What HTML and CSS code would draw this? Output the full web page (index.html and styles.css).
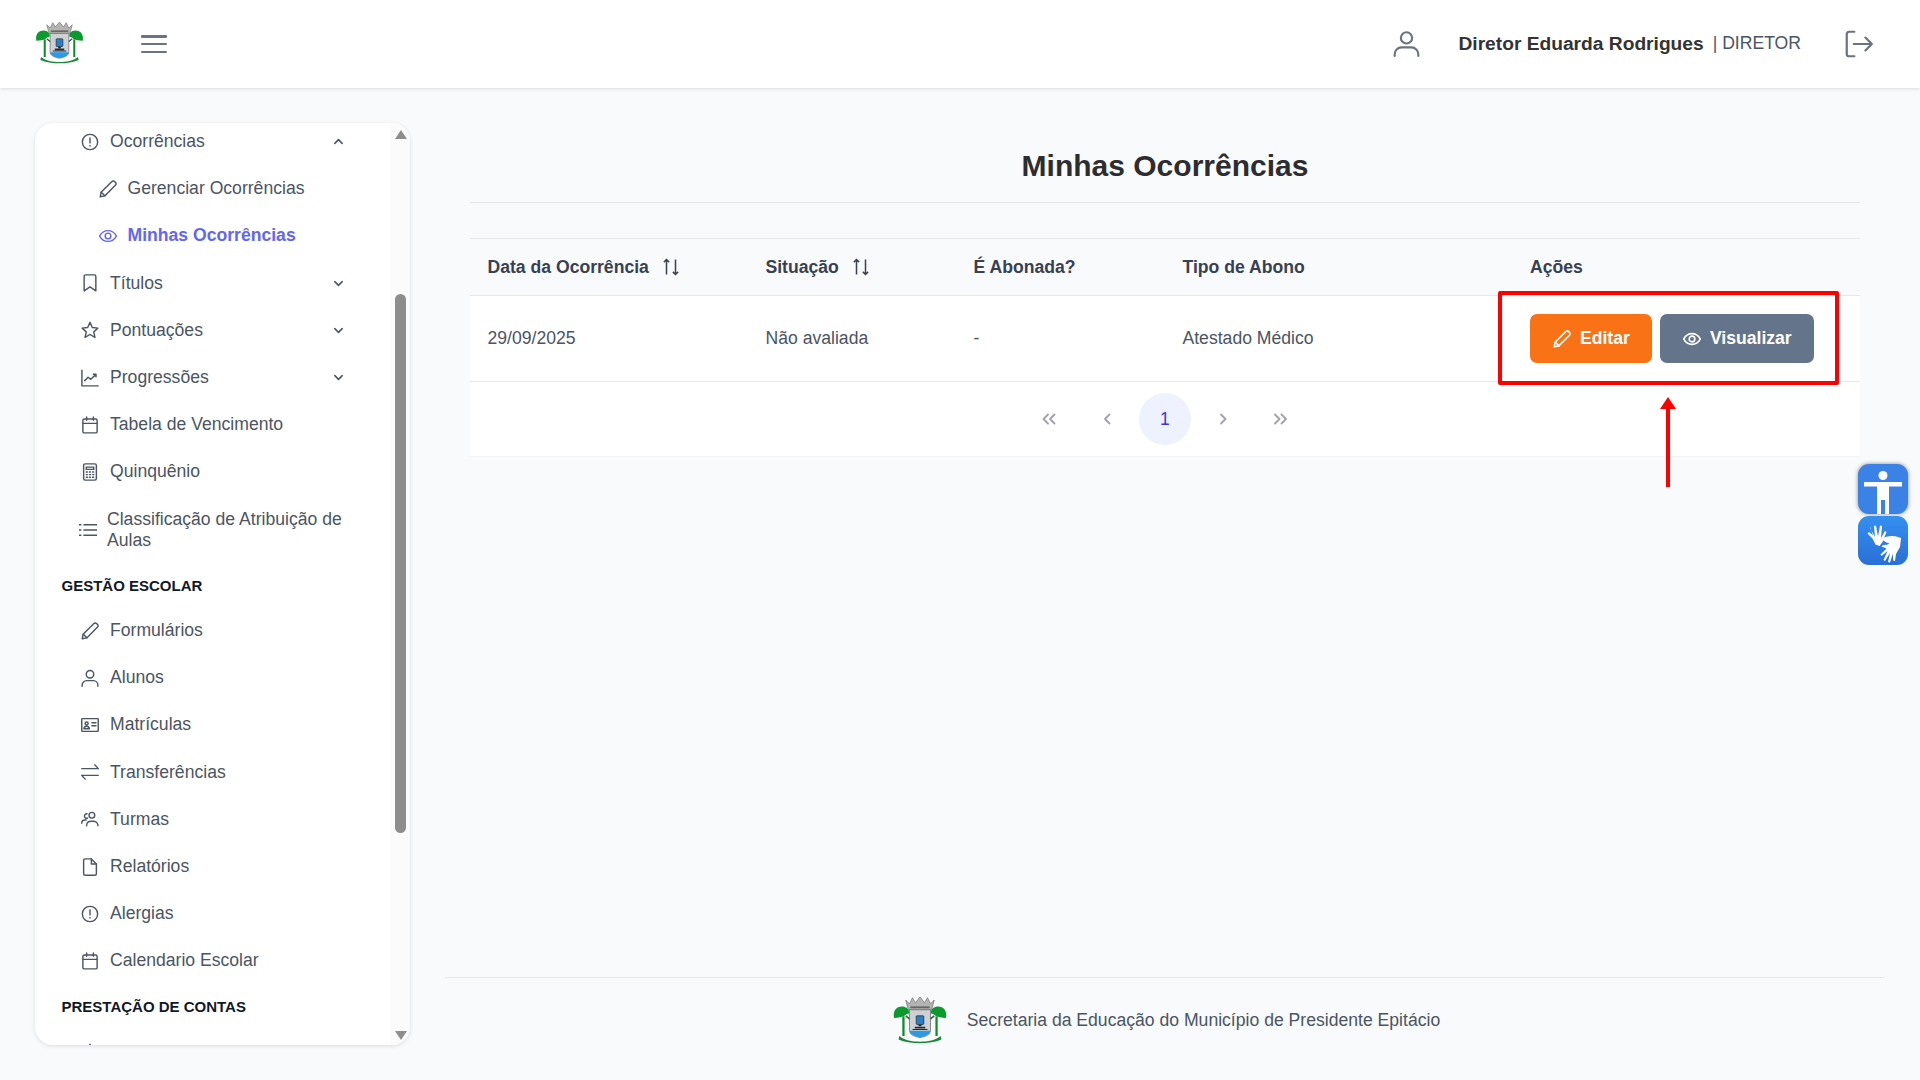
FILE: index.html
```html
<!DOCTYPE html>
<html lang="pt-BR">
<head>
<meta charset="utf-8">
<title>Minhas Ocorrências</title>
<link rel="stylesheet" href="styles.css">
</head>
<body>
<svg class="defs" aria-hidden="true">
  <symbol id="i-alert" viewBox="0 0 24 24"><circle cx="12" cy="12" r="10.2"/><path d="M12 6.600v6.600M12 16.600v.8"/></symbol>
  <symbol id="i-pencil" viewBox="0 0 24 24"><path d="M1.600 22.400l1.200-6.100L16.900 2.200a2.900 2.900 0 0 1 4.100 0l.8.8a2.900 2.900 0 0 1 0 4.100L7.700 21.200z"/><path d="M3 16.200l4.800 4.900"/></symbol>
  <symbol id="i-eye" viewBox="0 0 24 24"><path d="M.8 12C3.200 7.600 7.200 4.800 12 4.800S20.800 7.600 23.200 12C20.800 16.400 16.800 19.200 12 19.200S3.200 16.400.8 12z"/><circle cx="12" cy="12" r="3.800"/></symbol>
  <symbol id="i-bookmark" viewBox="0 0 24 24"><path d="M4.200 22.500V3.200a2 2 0 0 1 2-2h11.600a2 2 0 0 1 2 2v19.300L12 17.200z"/></symbol>
  <symbol id="i-star" viewBox="0 0 24 24"><path d="M12 1.800l3.100 6.900 7.400.8-5.500 5 1.600 7.300-6.600-3.800-6.600 3.800 1.600-7.300-5.500-5 7.400-.8z"/></symbol>
  <symbol id="i-chart" viewBox="0 0 24 24"><path d="M1.200 1.500v21h21.600"/><path d="M5 15.500l4.500-4.500 3.500 2.800 6.800-6.300M16.400 7h3.600v3.400"/></symbol>
  <symbol id="i-calendar" viewBox="0 0 24 24"><rect x="2.500" y="4" width="19" height="18.500" rx="2"/><path d="M2.500 9.800h19M7.500 1.300v4.500M16.500 1.300v4.500"/></symbol>
  <symbol id="i-calc" viewBox="0 0 24 24"><rect x="3.500" y="1.200" width="17" height="21.600" rx="2"/><path d="M7 5.500h10v3H7zM7 12h1.500M11.200 12h1.500M15.500 12h1.500M7 15.500h1.500M11.200 15.500h1.500M15.500 15.500h1.500M7 19h1.500M11.200 19h1.500M15.500 19h1.500"/></symbol>
  <symbol id="i-list" viewBox="0 0 24 24"><path d="M6.500 5h17M6.500 12h17M6.500 19h17M.5 5h2M.5 12h2M.5 19h2"/></symbol>
  <symbol id="i-user" viewBox="0 0 24 24"><circle cx="12" cy="7" r="5"/><path d="M1.500 23v-1.500a6 6 0 0 1 6-6h9a6 6 0 0 1 6 6V23"/></symbol>
  <symbol id="i-card" viewBox="0 0 24 24"><rect x="1" y="3.500" width="22" height="17" rx="1"/><circle cx="7.500" cy="10" r="2"/><path d="M3.800 17c.4-2.200 1.800-3.300 3.700-3.300s3.300 1.100 3.700 3.300zM14.500 9h5.500M14.500 13h5.500"/></symbol>
  <symbol id="i-swap" viewBox="0 0 24 24"><path d="M1 7.500h21.500M18.500 2.500l4.500 5M23 16.500H1.500M5.500 21.500L1 16.500"/></symbol>
  <symbol id="i-users" viewBox="0 0 24 24"><circle cx="14.500" cy="7" r="3.800"/><path d="M7.500 21v-1a6 6 0 0 1 6-5h2a6 6 0 0 1 7 5v1"/><path d="M8.800 10.800a3 3 0 1 1-.8-5.700M1 17.800v-.8a4 4 0 0 1 4-3.600h2"/></symbol>
  <symbol id="i-file" viewBox="0 0 24 24"><path d="M3.500 3.200a2 2 0 0 1 2-2h8.300l6.700 6.700v13a2 2 0 0 1-2 2H5.500a2 2 0 0 1-2-2z"/><path d="M13.800 1.200v6.700h6.700"/></symbol>
  <symbol id="i-out" viewBox="0 0 24 24"><path d="M8 1.500H3.500a2 2 0 0 0-2 2v17a2 2 0 0 0 2 2H8M7.500 12h15.500M17.500 6.500L23 12l-5.500 5.500"/></symbol>
  <symbol id="i-sort" viewBox="0 0 24 24"><path d="M6 22V2M2.500 5.500L6 2l3.500 3.500M18 2v20M14.500 18.500L18 22l3.500-3.500"/></symbol>
  <symbol id="logo" viewBox="0 0 140 125">
    <path d="M32 8l10 10 8-16 8 13 12-15 12 15 8-13 8 16 10-10-7 26H39z" fill="#b4b4b2" stroke="#77777a" stroke-width="2"/>
    <path d="M44 25h52v5H44z" fill="#66666a"/>
    <path d="M23 52h6v52h-6zM111 52h6v52h-6z" fill="#0f8a2f"/>
    <path d="M1 56C-3 36 8 24 24 25c11 1 18 8 17 19-6 1-10 3-14 8-7 1-13 3-26 4z" fill="#0b9a2d"/>
    <path d="M139 56c4-20-7-32-23-31-11 1-18 8-17 19 6 1 10 3 14 8 7 1 13 3 26 4z" fill="#0b9a2d"/>
    <path d="M42 34h56v54c0 12-12 17-28 20-16-3-28-8-28-20z" fill="#cfd0d2" stroke="#66686c" stroke-width="2"/>
    <rect x="60" y="50" width="20" height="23" rx="2" fill="#2a7fc4" stroke="#1a2a44" stroke-width="2"/>
    <path d="M66 73h8v5h-8zM56 79h28v5H56zM50 85h40v3H50z" fill="#2a2c30"/>
    <path d="M32 50l10 8M108 50l-10 8" stroke="#2f5a3a" stroke-width="4"/>
    <path d="M43 90h54c1 8-10 15-27 17-17-2-28-9-27-17z" fill="#2a9ae6"/>
    <path d="M15 104c14 12 34 15 55 15s41-3 55-15l2 9c-15 7-36 10-57 10s-42-3-57-10z" fill="#1a8a3a"/>
  </symbol>
</svg>

<header class="topbar">
  <div class="topbar-left">
    <svg class="logo-top"><use href="#logo"/></svg>
    <button class="burger" aria-label="Menu"><span></span><span></span><span></span></button>
  </div>
  <div class="topbar-right">
    <svg class="ico top-user"><use href="#i-user"/></svg>
    <strong class="user-name">Diretor Eduarda Rodrigues</strong>
    <span class="user-role">| DIRETOR</span>
    <svg class="ico top-out"><use href="#i-out"/></svg>
  </div>
</header>

<div class="content">
  <aside class="sidebar">
    <nav class="menu">
      <a class="item"><svg class="ico"><use href="#i-alert"/></svg><span class="label">Ocorrências</span><svg class="chev" viewBox="0 0 12 12"><path d="M2 8l4-4 4 4"/></svg></a>
      <a class="item sub"><svg class="ico"><use href="#i-pencil"/></svg><span class="label">Gerenciar Ocorrências</span></a>
      <a class="item sub active"><svg class="ico"><use href="#i-eye"/></svg><span class="label">Minhas Ocorrências</span></a>
      <a class="item"><svg class="ico"><use href="#i-bookmark"/></svg><span class="label">Títulos</span><svg class="chev" viewBox="0 0 12 12"><path d="M2 4l4 4 4-4"/></svg></a>
      <a class="item"><svg class="ico"><use href="#i-star"/></svg><span class="label">Pontuações</span><svg class="chev" viewBox="0 0 12 12"><path d="M2 4l4 4 4-4"/></svg></a>
      <a class="item"><svg class="ico"><use href="#i-chart"/></svg><span class="label">Progressões</span><svg class="chev" viewBox="0 0 12 12"><path d="M2 4l4 4 4-4"/></svg></a>
      <a class="item"><svg class="ico"><use href="#i-calendar"/></svg><span class="label">Tabela de Vencimento</span></a>
      <a class="item"><svg class="ico"><use href="#i-calc"/></svg><span class="label">Quinquênio</span></a>
      <a class="item multi"><svg class="ico"><use href="#i-list"/></svg><span class="label">Classificação de Atribuição de Aulas</span></a>
      <div class="section">GESTÃO ESCOLAR</div>
      <a class="item"><svg class="ico"><use href="#i-pencil"/></svg><span class="label">Formulários</span></a>
      <a class="item"><svg class="ico"><use href="#i-user"/></svg><span class="label">Alunos</span></a>
      <a class="item"><svg class="ico"><use href="#i-card"/></svg><span class="label">Matrículas</span></a>
      <a class="item"><svg class="ico"><use href="#i-swap"/></svg><span class="label">Transferências</span></a>
      <a class="item"><svg class="ico"><use href="#i-users"/></svg><span class="label">Turmas</span></a>
      <a class="item"><svg class="ico"><use href="#i-file"/></svg><span class="label">Relatórios</span></a>
      <a class="item"><svg class="ico"><use href="#i-alert"/></svg><span class="label">Alergias</span></a>
      <a class="item"><svg class="ico"><use href="#i-calendar"/></svg><span class="label">Calendario Escolar</span></a>
      <div class="section">PRESTAÇÃO DE CONTAS</div>
      <a class="item"><svg class="ico"><use href="#i-star"/></svg><span class="label"></span></a>
    </nav>
    <div class="scrollbar">
      <span class="arrow-up"></span>
      <span class="thumb"></span>
      <span class="arrow-down"></span>
    </div>
  </aside>

  <div class="main">
    <main class="panel">
      <h1 class="title">Minhas Ocorrências</h1>
      <table class="grid">
        <colgroup><col class="c1"><col class="c2"><col class="c3"><col class="c4"><col class="c5"></colgroup>
        <thead>
          <tr>
            <th><span class="th-in">Data da Ocorrência <svg class="sort"><use href="#i-sort"/></svg></span></th>
            <th><span class="th-in">Situação <svg class="sort"><use href="#i-sort"/></svg></span></th>
            <th>É Abonada?</th>
            <th>Tipo de Abono</th>
            <th class="th-actions">Ações</th>
          </tr>
        </thead>
        <tbody>
          <tr>
            <td>29/09/2025</td>
            <td>Não avaliada</td>
            <td>-</td>
            <td>Atestado Médico</td>
            <td class="td-actions">
              <div class="actions">
                <button class="btn btn-edit"><svg class="ico"><use href="#i-pencil"/></svg>Editar</button>
                <button class="btn btn-view"><svg class="ico"><use href="#i-eye"/></svg>Visualizar</button>
              </div>
            </td>
          </tr>
        </tbody>
      </table>
      <div class="pager">
        <span class="pg"><svg viewBox="0 0 14 12"><path d="M6 1.500L1.500 6 6 10.500M12.500 1.500L8 6l4.500 4.500"/></svg></span>
        <span class="pg"><svg viewBox="0 0 14 12"><path d="M9.500 1.500L5 6l4.500 4.500"/></svg></span>
        <span class="pg current">1</span>
        <span class="pg"><svg viewBox="0 0 14 12"><path d="M5 1.500L9.500 6 5 10.500"/></svg></span>
        <span class="pg"><svg viewBox="0 0 14 12"><path d="M1 1.500L5.500 6 1 10.500M7.500 1.500L12 6l-4.500 4.500"/></svg></span>
      </div>
    </main>
    <footer class="footer">
      <svg class="logo-foot"><use href="#logo"/></svg>
      <span>Secretaria da Educação do Município de Presidente Epitácio</span>
    </footer>
  </div>
</div>

<div class="mark-box"></div>
<svg class="mark-arrow" viewBox="0 0 16 90"><path d="M8 0l8 12H10v78H6V12H0z"/></svg>

<div class="a11y">
  <button class="a11y-btn a11y-body" aria-label="Acessibilidade">
    <svg viewBox="0 0 50 50"><circle cx="25" cy="11.500" r="4.500"/><path d="M6 18h38v4.500H31V50h-4V36h-4v14h-4V22.500H6z"/></svg>
  </button>
  <button class="a11y-btn a11y-hands" aria-label="Libras">
    <svg viewBox="0 0 50 50"><path d="M12 12l5 9-1-11 2-.5 2 11 2-11 2 .500-1 12 4-7 1.500 1-4 10-3 4-4-1.500-3-6-5-5 1.500-1.500 4 3.500-3-9z"/><path d="M23 23c5-3 12-4 17-2l3 1-1 9-4 7-1 7-2-.5 0-7-3 9-2-.5 2-9-5 8-1.500-1 4-9-6 5-1-1.500 6-6-5-2c1-1 3-2 5-1.500l3-1.500-3-1z"/></svg>
  </button>
</div>
</body>
</html>
```

FILE: styles.css
```css
* { box-sizing: border-box; }
html, body { margin: 0; height: 100%; }
body {
  width: 1920px;
  height: 1080px;
  overflow: hidden;
  position: relative;
  background: #f9fafb;
  color: #4b5563;
  font-family: "Liberation Sans", Arial, sans-serif;
  font-size: 17.6px;
  display: flex;
  flex-direction: column;
}
.defs { display: none; }
.ico {
  width: 18px;
  height: 18px;
  flex: none;
  fill: none;
  stroke: currentColor;
  stroke-width: 1.9;
  stroke-linecap: round;
  stroke-linejoin: round;
}

/* Top bar */
.topbar {
  height: 88px;
  flex: none;
  background: #fff;
  box-shadow: 0 1px 3px rgba(0, 0, 0, .12);
  display: flex;
  align-items: center;
  justify-content: space-between;
  padding: 0 47px 0 36px;
  position: relative;
  z-index: 2;
}
.topbar-left { display: flex; align-items: center; gap: 58px; }
.logo-top { width: 47px; height: 42px; display: block; margin-top: -2px; }
.burger {
  width: 26px;
  height: 18px;
  padding: 0;
  border: 0;
  background: none;
  display: flex;
  flex-direction: column;
  justify-content: space-between;
}
.burger span { display: block; height: 2.500px; background: #6b7280; border-radius: 1px; }
.topbar-right { display: flex; align-items: center; }
.top-user { width: 27px; height: 27px; color: #6b7280; stroke-width: 1.900; margin-right: 38px; margin-top: -2px; }
.user-name { font-size: 19.200px; color: #333; margin-right: 9px; margin-top: -1px; }
.user-role { font-size: 17.6px; color: #4b5563; margin-right: 44px; margin-top: -2px; }
.top-out { width: 28px; height: 28px; color: #6b7280; stroke-width: 1.900; margin-top: -1px; }

/* Page body */
.content { flex: 1; min-height: 0; display: flex; padding: 35px 35px 0; gap: 35px; }

/* Sidebar */
.sidebar {
  width: 375px;
  height: 922px;
  flex: none;
  display: flex;
  background: #fff;
  border-radius: 18px;
  overflow: hidden;
  box-shadow: 0 1px 4px rgba(0, 0, 0, .12);
}
.menu { flex: 1; min-width: 0; margin-top: -5px; padding-left: 27px; }
.item {
  height: 47.2px;
  display: flex;
  align-items: center;
  gap: 11px;
  padding-left: 19px;
  color: #4b5563;
}
.item.sub { padding-left: 36.500px; }
.item.active { color: #6366f1; font-weight: 700; }
.item.multi { height: 68px; padding-left: 17px; gap: 10px; padding-right: 30px; line-height: 21px; }
.item .label { flex: 1; }
.chev {
  width: 11px;
  height: 11px;
  flex: none;
  margin-right: 47px;
  fill: none;
  stroke: #4b5563;
  stroke-width: 1.7;
  stroke-linecap: round;
  stroke-linejoin: round;
}
.section {
  height: 43.500px;
  display: flex;
  align-items: center;
  margin-left: -.5px;
  font-size: 15px;
  font-weight: 700;
  color: #111827;
}
.scrollbar {
  width: 19px;
  flex: none;
  background: #fbfbfb;
  display: flex;
  flex-direction: column;
  align-items: center;
  padding: 7px 0 5px;
}
.arrow-up, .arrow-down { width: 0; height: 0; border-left: 6.500px solid transparent; border-right: 6.500px solid transparent; }
.arrow-up { border-bottom: 9px solid #8d8d8d; }
.arrow-down { border-top: 9px solid #8d8d8d; margin-top: auto; }
.thumb { width: 11px; height: 539px; background: #8d8d8d; border-radius: 6px; margin-top: 155px; }

/* Main */
.main { flex: 1; min-width: 0; display: flex; flex-direction: column; }
.panel { flex: 1; padding: 0 25px; }
.title {
  margin: 0 0 35px;
  padding: 25px 0 18px;
  height: 80px;
  text-align: center;
  font-size: 30px;
  line-height: 36px;
  font-weight: 700;
  color: #2d2d30;
  border-bottom: 1px solid #e5e7eb;
}
.grid {
  width: 100%;
  table-layout: fixed;
  border-collapse: collapse;
  border-top: 1px solid #e5e7eb;
}
.c1 { width: 278px; }
.c2 { width: 208px; }
.c3 { width: 209px; }
.c4 { width: 347px; }
th {
  height: 57px;
  padding: 0 0 0 17.500px;
  text-align: left;
  font-weight: 700;
  color: #374151;
  border-bottom: 1px solid #e5e7eb;
}
th.th-actions { padding-left: 18px; }
.th-in { display: inline-flex; align-items: center; gap: 13px; }
.sort {
  width: 18px;
  height: 18px;
  fill: none;
  stroke: #374151;
  stroke-width: 2;
}
td {
  height: 86px;
  padding: 0 0 0 17.500px;
  background: #fff;
  color: #4b5563;
  border-bottom: 1px solid #e5e7eb;
}
.td-actions { padding-left: 18px; }
.actions { display: flex; gap: 8px; }
.btn {
  height: 49px;
  padding: 0 23px;
  border: 0;
  border-radius: 7px;
  display: inline-flex;
  align-items: center;
  gap: 9px;
  color: #fff;
  font: 700 17.6px "Liberation Sans", Arial, sans-serif;
  white-space: nowrap;
}
.btn .ico { stroke-width: 2.100; }
.btn-edit { background: #f97316; padding-right: 22px; }
.btn-view { background: #64748b; gap: 9px; padding-right: 22px; }
.pager {
  height: 75px;
  background: #fff;
  border-bottom: 1px solid #f3f4f6;
  display: flex;
  align-items: center;
  justify-content: center;
  gap: 6px;
}
.pg {
  width: 52px;
  height: 52px;
  border-radius: 50%;
  display: flex;
  align-items: center;
  justify-content: center;
  color: #4338ca;
}
.pg svg { width: 14px; height: 12px; fill: none; stroke: #a1a1aa; stroke-width: 1.8; stroke-linecap: round; stroke-linejoin: round; }
.pg.current { background: #eef2ff; }

/* Footer */
.footer {
  height: 103px;
  flex: none;
  padding: 0 0 18px 3px;
  border-top: 1px solid #e2e8f0;
  display: flex;
  align-items: center;
  justify-content: center;
  gap: 20px;
  color: #4b5563;
}
.logo-foot { width: 54px; height: 47px; display: block; }

/* Annotation */
.mark-box {
  position: absolute;
  left: 1498px;
  top: 291px;
  width: 341px;
  height: 94px;
  border: 4px solid #ff0000;
  border-radius: 2px;
}
.mark-arrow {
  position: absolute;
  left: 1660px;
  top: 397px;
  width: 16px;
  height: 90px;
  fill: #ff0000;
}

/* Accessibility widgets */
.a11y { position: absolute; left: 1858px; top: 464px; display: flex; flex-direction: column; gap: 2px; }
.a11y-btn { width: 50px; height: 50px; padding: 0; border: 0; border-radius: 11px; display: block; }
.a11y-btn svg { width: 50px; height: 50px; display: block; fill: #fff; }
.a11y-body { background: #3b82e6; box-shadow: 0 0 4px rgba(0, 0, 0, .45); }
.a11y-hands { background: linear-gradient(to top, #2a6fd6, #3490f0); height: 49px; }
```
